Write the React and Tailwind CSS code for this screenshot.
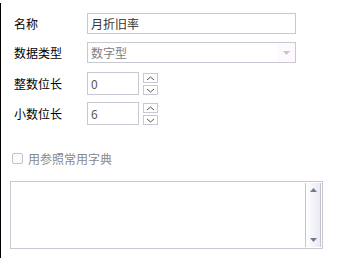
import React from "react";

const font = { fontFamily: '"Noto Sans CJK SC", "Noto Sans", sans-serif' };

function Spinner() {
  return (
    <div className="ml-[4px] flex flex-col justify-between h-[22px] mt-[1px]">
      <div className="w-[15px] h-[10px] border border-[#c8c8d2] bg-white flex items-center justify-center">
        <svg width="9" height="5" viewBox="0 0 9 5"><path d="M1 4 L4.5 1 L8 4" fill="none" stroke="#555" strokeWidth="1" /></svg>
      </div>
      <div className="w-[15px] h-[10px] border border-[#c8c8d2] bg-white flex items-center justify-center">
        <svg width="9" height="5" viewBox="0 0 9 5"><path d="M1 1 L4.5 4 L8 1" fill="none" stroke="#555" strokeWidth="1" /></svg>
      </div>
    </div>
  );
}

export default function App() {
  return (
    <div className="w-[346px] h-[258px] bg-white overflow-hidden flex" style={font}>
      <div className="w-px h-full bg-black mt-[3px]" />
      <div className="flex-1 flex flex-col pt-[13px] text-[12px] leading-none">
        <div className="flex items-center h-[21px]">
          <div className="w-[86px] pl-[13px] text-black">名称</div>
          <div className="w-[209px] h-[21px] border border-[#c8c8d2] flex items-center pl-[3px] text-[#333]">月折旧率</div>
        </div>
        <div className="flex items-center h-[21px] mt-[8px]">
          <div className="w-[86px] pl-[13px] text-black">数据类型</div>
          <div className="w-[209px] h-[21px] border border-[#c8c8d2] flex items-center pl-[3px] text-[#808080]">
            <span className="flex-1">数字型</span>
            <div className="w-[18px] h-full bg-[#fdf9fd] flex items-center justify-center">
              <svg width="7" height="4" viewBox="0 0 7 4"><path d="M0 0 H7 L3.5 4 Z" fill="#c4c4cc" /></svg>
            </div>
          </div>
        </div>
        <div className="flex items-start h-[23px] mt-[9px]">
          <div className="w-[86px] pl-[13px] text-black self-center">整数位长</div>
          <div className="w-[52px] h-[23px] border border-[#c8c8d2] flex items-center pl-[3px] text-[#555]">0</div>
          <Spinner />
        </div>
        <div className="flex items-start h-[23px] mt-[7px]">
          <div className="w-[86px] pl-[13px] text-black self-center">小数位长</div>
          <div className="w-[52px] h-[23px] border border-[#c8c8d2] flex items-center pl-[3px] text-[#555]">6</div>
          <Spinner />
        </div>
        <div className="flex items-center h-[11px] mt-[28px] pl-[11px]">
          <div className="w-[11px] h-[11px] border border-[#c4c4cc] rounded-[2px] bg-[#fbfbfd]" />
          <span className="ml-[5px] text-[#888]">用参照常用字典</span>
        </div>
        <div className="mt-[17px] ml-[9px] w-[313px] h-[68px] border border-[#c8c8d2] flex justify-end pr-[1px] py-[1px]">
          <div className="w-[16px] h-full border-l border-r border-[#c4c4cc] bg-gradient-to-r from-white to-[#e9eaf3] flex flex-col items-center justify-between py-[5px]">
            <svg width="7" height="4" viewBox="0 0 7 4"><path d="M0 4 H7 L3.5 0 Z" fill="#6c7a94" /></svg>
            <svg width="7" height="4" viewBox="0 0 7 4"><path d="M0 0 H7 L3.5 4 Z" fill="#6c7a94" /></svg>
          </div>
        </div>
      </div>
    </div>
  );
}
